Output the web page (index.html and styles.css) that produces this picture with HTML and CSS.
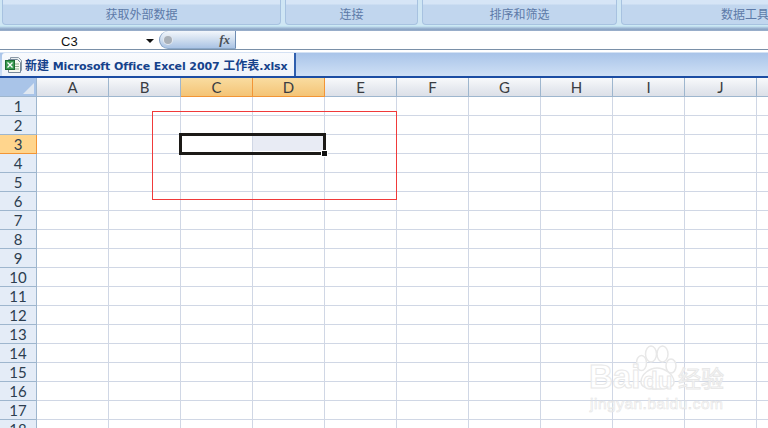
FILE: index.html
```html
<!DOCTYPE html>
<html lang="zh">
<head>
<meta charset="utf-8">
<title>Excel 2007</title>
<link rel="stylesheet" href="styles.css">
</head>
<body>
<div class="app">
  <div class="ribbon">
    <div class="group g1"><span>获取外部数据</span></div>
    <div class="group g2"><span>连接</span></div>
    <div class="group g3"><span>排序和筛选</span></div>
    <div class="group g4"><span>数据工具</span></div>
  </div>
  <div class="formula">
    <div class="namebox"><span class="cellname">C3</span><span class="arrow"></span></div>
    <div class="fxpill"><span class="knob"></span><span class="fx">fx</span></div>
    <div class="input"></div>
  </div>
  <div class="tabbar">
    <div class="tab">
      <svg class="xl" width="17" height="18" viewBox="0 0 17 18">
        <path d="M5.500 1.500h8l3 3v10h-11z" fill="#e9eef0" stroke="#8a98a6"/>
        <path d="M3.500 3.500h9l3 3v10h-12z" fill="#f6f8f0" stroke="#76889a"/>
        <path d="M9 8h5M9 10.500h5M9 13h5" stroke="#93b08f" fill="none"/>
        <rect x="0.500" y="4.500" width="9" height="9" fill="#3a9a50" stroke="#1d6b32"/>
        <path d="M2.500 6.500l5 5M7.500 6.500l-5 5" stroke="#fff" stroke-width="1.300" fill="none"/>
      </svg>
      <span class="tabname"><span class="tabcjk">新建</span> Microsoft Office Excel 2007 <span class="tabcjk">工作表</span>.xlsx</span>
    </div>
  </div>
  <div class="sheet">
    <div class="colheads">
      <div class="corner"><span class="tri"></span></div>
      <div class="ch">A</div><div class="ch">B</div><div class="ch on">C</div><div class="ch on">D</div><div class="ch">E</div><div class="ch">F</div><div class="ch">G</div><div class="ch">H</div><div class="ch">I</div><div class="ch">J</div><div class="ch"></div>
    </div>
    <div class="row"><div class="rh">1</div><i></i><i></i><i></i><i></i><i></i><i></i><i></i><i></i><i></i><i></i><i></i></div>
    <div class="row"><div class="rh">2</div><i></i><i></i><i></i><i></i><i></i><i></i><i></i><i></i><i></i><i></i><i></i></div>
    <div class="row"><div class="rh on">3</div><i></i><i></i><i></i><i></i><i></i><i></i><i></i><i></i><i></i><i></i><i></i></div>
    <div class="row"><div class="rh">4</div><i></i><i></i><i></i><i></i><i></i><i></i><i></i><i></i><i></i><i></i><i></i></div>
    <div class="row"><div class="rh">5</div><i></i><i></i><i></i><i></i><i></i><i></i><i></i><i></i><i></i><i></i><i></i></div>
    <div class="row"><div class="rh">6</div><i></i><i></i><i></i><i></i><i></i><i></i><i></i><i></i><i></i><i></i><i></i></div>
    <div class="row"><div class="rh">7</div><i></i><i></i><i></i><i></i><i></i><i></i><i></i><i></i><i></i><i></i><i></i></div>
    <div class="row"><div class="rh">8</div><i></i><i></i><i></i><i></i><i></i><i></i><i></i><i></i><i></i><i></i><i></i></div>
    <div class="row"><div class="rh">9</div><i></i><i></i><i></i><i></i><i></i><i></i><i></i><i></i><i></i><i></i><i></i></div>
    <div class="row"><div class="rh">10</div><i></i><i></i><i></i><i></i><i></i><i></i><i></i><i></i><i></i><i></i><i></i></div>
    <div class="row"><div class="rh">11</div><i></i><i></i><i></i><i></i><i></i><i></i><i></i><i></i><i></i><i></i><i></i></div>
    <div class="row"><div class="rh">12</div><i></i><i></i><i></i><i></i><i></i><i></i><i></i><i></i><i></i><i></i><i></i></div>
    <div class="row"><div class="rh">13</div><i></i><i></i><i></i><i></i><i></i><i></i><i></i><i></i><i></i><i></i><i></i></div>
    <div class="row"><div class="rh">14</div><i></i><i></i><i></i><i></i><i></i><i></i><i></i><i></i><i></i><i></i><i></i></div>
    <div class="row"><div class="rh">15</div><i></i><i></i><i></i><i></i><i></i><i></i><i></i><i></i><i></i><i></i><i></i></div>
    <div class="row"><div class="rh">16</div><i></i><i></i><i></i><i></i><i></i><i></i><i></i><i></i><i></i><i></i><i></i></div>
    <div class="row"><div class="rh">17</div><i></i><i></i><i></i><i></i><i></i><i></i><i></i><i></i><i></i><i></i><i></i></div>
    <div class="row"><div class="rh">18</div><i></i><i></i><i></i><i></i><i></i><i></i><i></i><i></i><i></i><i></i><i></i></div>
    <div class="selection"><span class="fillcell"></span><span class="handle"></span></div>
    <div class="redbox"></div>
    <div class="watermark">
      <svg class="paw" width="44" height="46" viewBox="0 0 44 46">
        <g fill="#fff" fill-opacity="0.700" stroke="#e8e8e8" stroke-width="1.500">
          <ellipse cx="5.500" cy="18" rx="5" ry="7.500"/>
          <ellipse cx="15" cy="9" rx="5.500" ry="8"/>
          <ellipse cx="26.500" cy="9" rx="5.500" ry="8"/>
          <ellipse cx="35" cy="21" rx="5" ry="7"/>
          <path d="M5 37c0-8 9-14 16-14s17 6 17 14c0 5-6 7-17 7S5 42 5 37z"/>
        </g>
      </svg>
      <span class="wm-bai">Bai</span>
      <span class="wm-du">du</span>
      <span class="wm-jy">经验</span>
      <span class="wm-url">jingyan.baidu.com</span>
    </div>
  </div>
</div>
</body>
</html>
```
FILE: styles.css
```css
html, body { margin: 0; padding: 0; }
body { width: 768px; height: 428px; overflow: hidden; background: #fff; }
.app { width: 768px; height: 428px; overflow: hidden; display: flex; flex-direction: column; font-family: "Liberation Sans", "Noto Sans CJK SC", sans-serif; }

.ribbon { flex: none; height: 31px; box-sizing: border-box; display: flex; gap: 4px; padding-left: 2px; align-items: flex-start;
  background: linear-gradient(#cfe6f4 0, #cfe6f4 25px, #c9ecf5 26px, #b6d0e6 27px, #8fa9c8 29px, #8aa3c4 30px, #a5b7cf 31px); overflow: hidden; }
.group { flex: none; height: 25px; box-sizing: border-box; border: 1px solid #a7c2e0; border-top: 0; border-radius: 0 0 4px 4px; text-align: center;
  background: linear-gradient(#d6e5f6 0, #d6e5f6 4px, #c1d6ee 5px, #c1d6ee 100%); color: #5d7aa8; font-size: 12px; line-height: 14px; padding-top: 8px; }
.g1 { width: 279px; }
.g2 { width: 133px; }
.g3 { width: 195px; }
.g4 { width: 248px; }

.formula { flex: none; height: 18px; display: flex; background: #fff; }
.namebox { flex: none; width: 159px; display: flex; align-items: center; position: relative; }
.cellname { margin-left: 61px; padding-top: 3px; font-size: 13px; color: #111; }
.arrow { position: absolute; left: 146px; top: 8px; width: 0; height: 0; border: 4px solid transparent; border-top: 4px solid #111; border-bottom: 0; }
.fxpill { flex: none; width: 77px; height: 18px; box-sizing: border-box; display: flex; align-items: center; justify-content: space-between; border-left: 1px solid #7f9cc0; border-right: 1px solid #6f8db3; border-bottom: 1px solid #8ba8c9; border-radius: 9px 0 0 9px;
  background: linear-gradient(#f3f7fc, #d0deef 50%, #aac3e4); }
.knob { width: 8px; height: 8px; margin-left: 4px; border-radius: 50%; background: #a9b0b8; box-shadow: 0 0 0 1px #e4e9ef; }
.fx { margin-right: 5px; padding-top: 1px; font: italic bold 13px "Liberation Serif", serif; color: #4a4f55; }
.input { flex: 1; }

.tabbar { flex: none; height: 29px; box-sizing: border-box; border-top: 1px solid #7a90a8; border-bottom: 2px solid #1c4da3; padding: 3px 0 0 2px;
  background: linear-gradient(#fff 0, #fff 2px, #a9c4e9 3px, #cfe0f5 26px); }
.tab { width: 294px; height: 23px; box-sizing: border-box; display: flex; align-items: center; background: linear-gradient(#f8fafd, #eef3fa); border-right: 2px solid #2f5fae; border-radius: 3px 0 0 0; padding-left: 3px; }
.xl { flex: none; margin-right: 3px; }
.tabname { font: bold 11px "DejaVu Sans", "Noto Sans CJK SC", sans-serif; color: #15428b; white-space: nowrap; letter-spacing: -0.100px; }
.tabcjk { font-size: 12px; letter-spacing: 0; }

.sheet { flex: none; position: relative; height: 350px; background: #fff; }
.colheads { display: flex; height: 19px; }
.corner { flex: none; width: 37px; height: 19px; box-sizing: border-box; background: #a9c4e8; border-right: 1px solid #9eb6ce; border-bottom: 1px solid #9eb6ce; position: relative; }
.tri { position: absolute; right: 2px; bottom: 2px; width: 0; height: 0; border-left: 11px solid transparent; border-bottom: 11px solid #dfe7f1; }
.ch { flex: none; width: 72px; height: 19px; box-sizing: border-box; text-align: center; border-right: 1px solid #9eb6ce; border-bottom: 1px solid #9eb6ce; background: linear-gradient(#f8f9fb, #e6e9ef 60%, #dce0e8); font: 15px/18px "Lato", sans-serif; color: #3a3d42; }
.ch.on { background: linear-gradient(#f9dca0, #f4c476); border-right-color: #f29536; border-bottom-color: #f29536; }
.row { display: flex; height: 19px; }
.rh { flex: none; width: 37px; height: 19px; box-sizing: border-box; text-align: center; background: #e4ecf7; border-right: 1px solid #9eb6ce; border-bottom: 1px solid #9eb6ce; font: 15px/19px "Lato", sans-serif; color: #2c3e50; }
.rh.on { background: #ffd58d; border-right-color: #f29536; border-bottom-color: #f29536; }
.row i { flex: none; width: 72px; height: 19px; box-sizing: border-box; border-right: 1px solid #d0d7e5; border-bottom: 1px solid #d0d7e5; }

.selection { position: absolute; left: 179px; top: 55px; width: 147px; height: 22px; box-sizing: border-box; border: 3px solid #1c1a17; }
.fillcell { position: absolute; left: 71px; top: 0; width: 70px; height: 15px; background: #e8ebf4; }
.handle { position: absolute; right: -4px; bottom: -4px; width: 5px; height: 5px; background: #111; outline: 1px solid #fff; }
.redbox { position: absolute; left: 152px; top: 33px; width: 245px; height: 89px; box-sizing: border-box; border: 1px solid #f03a3a; }

.watermark { position: absolute; left: 588px; top: 264px; width: 180px; height: 86px; }
.paw { position: absolute; left: 48px; top: 3px; }
.wm-bai, .wm-du, .wm-jy, .wm-url { position: absolute; color: rgba(255,255,255,0.700); -webkit-text-stroke: 1px #e8e8e8; white-space: nowrap; }
.wm-bai { left: 1px; top: 18px; font: bold 33px/34px "Liberation Sans", sans-serif; }
.wm-du { left: 55px; top: 26px; font: bold 24px/26px "Liberation Sans", sans-serif; }
.wm-jy { left: 90px; top: 21px; font: 23px/28px "Noto Sans CJK SC", sans-serif; }
.wm-url { left: 2px; top: 53px; font: 15.500px/17px "Liberation Sans", sans-serif; letter-spacing: 0.500px; -webkit-text-stroke: 0.600px #e4e4e4; }
```
